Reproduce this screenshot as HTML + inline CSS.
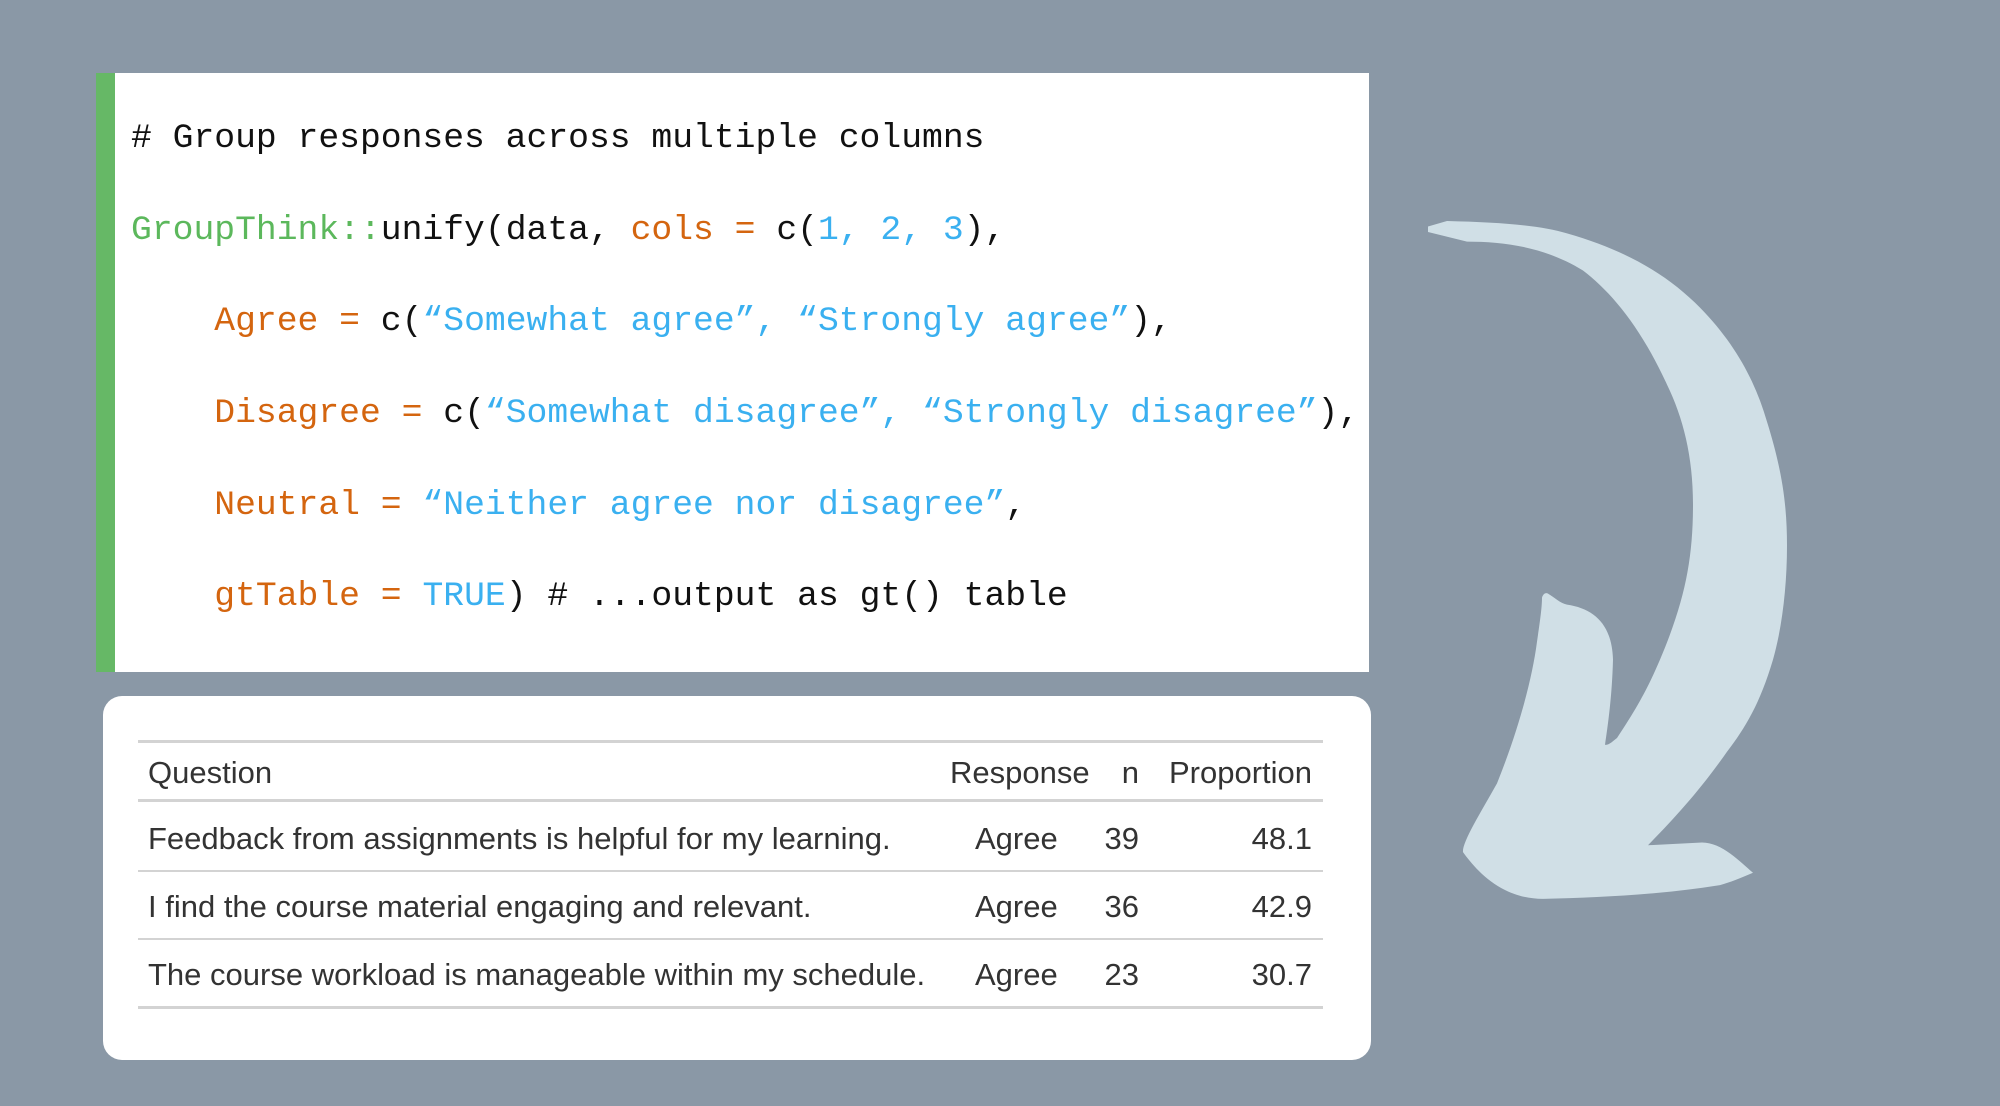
<!DOCTYPE html>
<html><head><meta charset="utf-8"><style>
body{margin:0;width:2000px;height:1106px;background:#8a98a6;position:relative;overflow:hidden}
.code{position:absolute;left:96px;top:73px;width:1273px;height:599px;background:#fff}
.bar{position:absolute;left:0;top:0;width:19px;height:599px;background:#66b866}
.ln{position:absolute;left:35px;font-family:"Liberation Mono",monospace;font-size:34.7px;line-height:40px;color:#111;white-space:pre}
.g{color:#5cb85c}.o{color:#d4650f}.b{color:#3ab0f0}
.card{position:absolute;left:103px;top:696px;width:1268px;height:364px;background:#fff;border-radius:19px}
.t{position:absolute;font-family:"Liberation Sans",sans-serif;font-size:31px;color:#333;line-height:36px;white-space:nowrap}
.hr{position:absolute;left:138px;width:1185px;background:#d3d3d3}
</style></head><body>
<div class="code"><div class="bar"></div>
<div class="ln" style="top:46px"># Group responses across multiple columns</div>
<div class="ln" style="top:138px"><span class="g">GroupThink::</span>unify(data, <span class="o">cols =</span> c(<span class="b">1, 2, 3</span>),</div>
<div class="ln" style="top:229px">    <span class="o">Agree =</span> c(<span class="b">“Somewhat agree”, “Strongly agree”</span>),</div>
<div class="ln" style="top:321px">    <span class="o">Disagree =</span> c(<span class="b">“Somewhat disagree”, “Strongly disagree”</span>),</div>
<div class="ln" style="top:413px">    <span class="o">Neutral =</span> <span class="b">“Neither agree nor disagree”</span>,</div>
<div class="ln" style="top:504px">    <span class="o">gtTable =</span> <span class="b">TRUE</span>) # ...output as gt() table</div>
</div>
<div class="card"></div>
<div class="hr" style="top:740px;height:3px"></div>
<div class="hr" style="top:799px;height:3px"></div>
<div class="hr" style="top:870px;height:2px"></div>
<div class="hr" style="top:938px;height:2px"></div>
<div class="hr" style="top:1006px;height:3px"></div>
<div class="t" style="left:148px;top:755px">Question</div>
<div class="t" style="left:950px;top:755px">Response</div>
<div class="t" style="left:1108px;top:755px;width:31px;text-align:right">n</div>
<div class="t" style="left:1100px;top:755px;width:212px;text-align:right">Proportion</div>
<div class="t" style="left:148px;top:821px">Feedback from assignments is helpful for my learning.</div>
<div class="t" style="left:975px;top:821px">Agree</div>
<div class="t" style="left:1100px;top:821px;width:39px;text-align:right">39</div>
<div class="t" style="left:1100px;top:821px;width:212px;text-align:right">48.1</div>
<div class="t" style="left:148px;top:889px">I find the course material engaging and relevant.</div>
<div class="t" style="left:975px;top:889px">Agree</div>
<div class="t" style="left:1100px;top:889px;width:39px;text-align:right">36</div>
<div class="t" style="left:1100px;top:889px;width:212px;text-align:right">42.9</div>
<div class="t" style="left:148px;top:957px">The course workload is manageable within my schedule.</div>
<div class="t" style="left:975px;top:957px">Agree</div>
<div class="t" style="left:1100px;top:957px;width:39px;text-align:right">23</div>
<div class="t" style="left:1100px;top:957px;width:212px;text-align:right">30.7</div>
<svg style="position:absolute;left:0;top:0" width="2000" height="1106">
<path transform="matrix(1 0 0 1.375 0 -73.25)" fill="#d0dfe6" d="M1428,218 L1447,214 C1500,215 1540,217 1567,223 C1630,236 1670,255 1700,277 C1735,303 1755,330 1767,360 C1782,395 1787,420 1787,450 C1787,480 1782,510 1773,533 C1760,565 1745,583 1727,600 C1700,628 1675,648 1648,668 L1702,666 C1722,666 1740,680 1753,688 C1740,692 1730,695 1720,697 C1660,704 1600,706 1543,707 C1500,707 1475,685 1463,673 C1462,666 1480,645 1497,623 C1518,585 1532,548 1537,520 C1540,505 1542,495 1542,488 C1543,485 1546,484 1548,485 C1555,488 1560,492 1567,493 C1595,496 1612,508 1613,533 C1612,560 1608,580 1605,595 C1610,595 1613,592 1617,590 C1640,565 1650,550 1660,533 C1685,490 1693,460 1693,420 C1693,385 1683,357 1667,333 C1640,290 1610,265 1583,250 C1545,233 1505,229 1467,229 L1428,222 Z"/>
</svg>
</body></html>
